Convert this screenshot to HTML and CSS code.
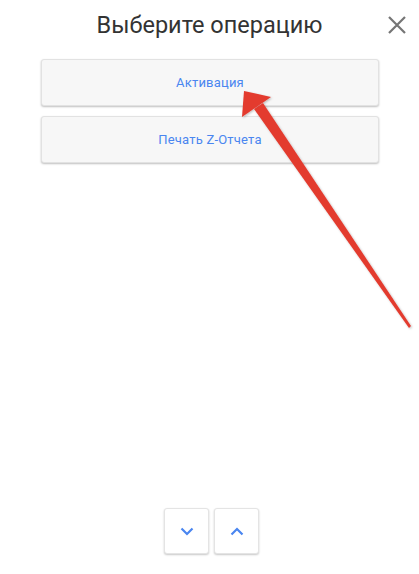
FILE: index.html
```html
<!DOCTYPE html>
<html lang="ru">
<head>
  <meta charset="UTF-8" />
  <meta name="viewport" content="width=device-width, initial-scale=1.0"/>
  <title>Выберите операцию</title>
  <link rel="stylesheet" href="styles.css">
</head>
<body>
  <div class="dialog">
    <header class="dialog-head">
      <h1>Выберите операцию</h1>
      <button class="close" title="Закрыть">
        <svg width="20" height="20" viewBox="0 0 20 20">
          <path d="M2 2 L18 18 M18 2 L2 18" stroke="#757575" stroke-width="2.2" fill="none"/>
        </svg>
      </button>
    </header>

    <div class="ops">
      <button class="op">Активация</button>
      <button class="op">Печать Z-Отчета</button>
    </div>

    <div class="pager">
      <button class="page-btn" title="Вниз">
        <svg width="14" height="9" viewBox="0 0 14 9">
          <path d="M1.5 1.5 L7 7 L12.5 1.5" stroke="#4a86f0" stroke-width="2.2" fill="none"/>
        </svg>
      </button>
      <button class="page-btn" title="Вверх">
        <svg width="14" height="9" viewBox="0 0 14 9">
          <path d="M1.5 7.5 L7 2 L12.5 7.5" stroke="#4a86f0" stroke-width="2.2" fill="none"/>
        </svg>
      </button>
    </div>

    <!-- red pointer drawn over the screenshot -->
    <svg class="pointer" width="419" height="574" viewBox="0 0 419 574">
      <defs>
        <filter id="sh" x="-10%" y="-10%" width="120%" height="120%">
          <feDropShadow dx="1" dy="1" stdDeviation="1" flood-color="#000" flood-opacity="0.25"/>
        </filter>
      </defs>
      <g filter="url(#sh)" fill="#e33b2f">
        <polygon points="409,328 411,326 263,103 254,109"/>
        <polygon points="244,91 271,97 242,117"/>
      </g>
    </svg>
  </div>
</body>
</html>
```

FILE: styles.css
```css
* { margin: 0; padding: 0; box-sizing: border-box; }

body {
  font-family: Roboto, 'Noto Sans', sans-serif;
  background: #fff;
  width: 419px;
  height: 574px;
  overflow: hidden;
}

.dialog {
  position: relative;
  height: 574px;
  display: flex;
  flex-direction: column;
}

.dialog-head {
  position: relative;
  height: 52px;
  display: flex;
  align-items: center;
  justify-content: center;
}

.dialog-head h1 {
  font-size: 23.5px;
  font-weight: 400;
  color: #333;
  margin-top: -2px;
}

.close {
  position: absolute;
  right: 12px;
  top: 15px;
  background: none;
  border: none;
  width: 20px;
  height: 20px;
  cursor: pointer;
}

.close svg { display: block; }

.ops {
  display: flex;
  flex-direction: column;
  gap: 10px;
  padding: 7px 40px 0 41px;
}

.op {
  height: 47px;
  background: #f7f7f7;
  border: 1px solid #e2e2e2;
  border-radius: 3px;
  box-shadow: 0 1px 2px rgba(0, 0, 0, 0.25);
  color: #4a86f0;
  font-family: Roboto, 'Noto Sans', sans-serif;
  font-size: 13px;
  letter-spacing: 0.2px;
  cursor: pointer;
}

.pager {
  margin-top: auto;
  display: flex;
  justify-content: center;
  gap: 5px;
  padding: 0 0 20px 4px;
}

.page-btn {
  width: 45px;
  height: 46px;
  background: #fff;
  border: 1px solid #e4e4e4;
  border-radius: 3px;
  box-shadow: 0 1px 2px rgba(0, 0, 0, 0.22);
  display: flex;
  align-items: center;
  justify-content: center;
  cursor: pointer;
}

.page-btn svg { display: block; }

.pointer {
  position: absolute;
  top: 0;
  left: 0;
  pointer-events: none;
}
```
